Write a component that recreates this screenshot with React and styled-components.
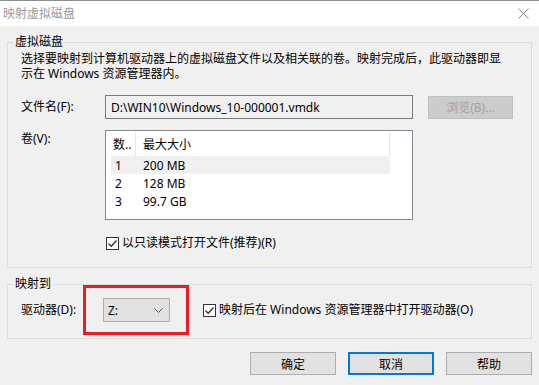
import styled, { createGlobalStyle } from "styled-components";

const GlobalStyle = createGlobalStyle`
  body {
    margin: 0;
    background: #f0f0f0;
    font-family: "Noto Sans", "Noto Sans CJK SC", sans-serif;
    font-size: 12px;
    color: #000;
  }
`;

const Window = styled.div`
  width: 539px;
  height: 385px;
  display: flex;
  flex-direction: column;
  background: #f0f0f0;
  overflow: hidden;
`;

const TitleBar = styled.div`
  height: 25px;
  border-top: 1px solid #8e8e8e;
  background: #fff;
  display: flex;
  align-items: center;
  justify-content: space-between;
  padding: 0 10px 0 3px;
`;

const Title = styled.span`
  color: #9a9a9a;
  line-height: 16px;
`;

const Body = styled.div`
  padding: 8px 7px 0 7px;
  display: flex;
  flex-direction: column;
`;

const Group = styled.fieldset`
  margin: ${(p) => p.$top || 0}px 0 0 0;
  border: 1px solid #dcdcdc;
  padding: ${(p) => p.$padTop}px 12px 16px 13px;
  min-width: 0;
`;

const Legend = styled.legend`
  padding: 0 2px;
  margin-left: -8px;
  line-height: 16px;
`;

const Description = styled.p`
  margin: 0;
  line-height: 15px;
`;

const Row = styled.div`
  display: flex;
  align-items: ${(p) => p.$align || "center"};
  margin-top: ${(p) => p.$top || 0}px;
`;

const Label = styled.span`
  width: ${(p) => p.$width}px;
  flex: none;
  line-height: 16px;
  padding-top: ${(p) => p.$padTop || 0}px;
`;

const TextBox = styled.div`
  width: 308px;
  height: 24px;
  box-sizing: border-box;
  border: 1px solid #7a7a7a;
  background: #f0f0f0;
  padding-left: 5px;
  display: flex;
  align-items: center;
`;

const Button = styled.button`
  width: ${(p) => p.$width || 86}px;
  height: 23px;
  box-sizing: border-box;
  margin: 0;
  margin-left: ${(p) => p.$left || 0}px;
  padding: 0;
  font: inherit;
  background: ${(p) => (p.disabled ? "#cccccc" : "#e1e1e1")};
  color: ${(p) => (p.disabled ? "#a0a0a0" : "#000")};
  border: ${(p) =>
    p.$focused ? "2px solid #0078d7" : `1px solid ${p.disabled ? "#bfbfbf" : "#adadad"}`};
`;

const ListBox = styled.div`
  width: 308px;
  height: 90px;
  box-sizing: border-box;
  border: 1px solid #828790;
  background: #fff;
  padding: 1px 0 0 5px;
`;

const ListRow = styled.div`
  width: 279px;
  height: ${(p) => (p.$header ? 24 : 18)}px;
  display: grid;
  grid-template-columns: 25px 254px;
  align-items: center;
  background: ${(p) => (p.$hover ? "#f0f0f0" : "transparent")};
`;

const Cell = styled.div`
  height: 100%;
  box-sizing: border-box;
  display: flex;
  align-items: center;
  padding-left: ${(p) => p.$pad}px;
  border-right: ${(p) => (p.$header ? "1px solid #e5e5e5" : "none")};
  white-space: nowrap;
`;

const CheckRow = styled.label`
  display: flex;
  align-items: center;
  gap: 3px;
  line-height: 16px;
  margin-left: ${(p) => p.$left || 0}px;
`;

const ComboWrap = styled.div`
  position: relative;
`;

const Combo = styled.div`
  width: 67px;
  height: 24px;
  box-sizing: border-box;
  border: 1px solid #adadad;
  background: #e1e1e1;
  display: flex;
  align-items: center;
  justify-content: space-between;
  padding: 0 6px 0 4px;
`;

const Highlight = styled.div`
  position: absolute;
  inset: -13px -19px -13px -20px;
  border: 3px solid #ec1c24;
  pointer-events: none;
`;

const Footer = styled.div`
  display: flex;
  justify-content: flex-end;
  gap: 12px;
  margin-top: 13px;
`;

const CheckBox = () => (
  <svg width="13" height="13" viewBox="0 0 13 13">
    <rect x="0.5" y="0.5" width="12" height="12" fill="#fff" stroke="#333" />
    <path d="M2.5 6.5 L5.2 9.2 L10.5 3.5" fill="none" stroke="#333" strokeWidth="1.3" />
  </svg>
);

const volumes = [
  { n: "1", size: "200 MB" },
  { n: "2", size: "128 MB" },
  { n: "3", size: "99.7 GB" },
];

export default function App() {
  return (
    <Window>
      <GlobalStyle />
      <TitleBar>
        <Title>映射虚拟磁盘</Title>
        <svg width="11" height="11" viewBox="0 0 11 11">
          <path d="M0.5 0.5 L10.5 10.5 M10.5 0.5 L0.5 10.5" stroke="#8a8a8a" strokeWidth="1" />
        </svg>
      </TitleBar>
      <Body>
        <Group $padTop={1}>
          <Legend>虚拟磁盘</Legend>
          <Description>
            选择要映射到计算机驱动器上的虚拟磁盘文件以及相关联的卷。映射完成后，此驱动器即显
            <br />
            示在 Windows 资源管理器内。
          </Description>
          <Row $top={14}>
            <Label $width={84}>文件名(F):</Label>
            <TextBox>D:\WIN10\Windows_10-000001.vmdk</TextBox>
            <Button disabled $width={85} $left={15}>
              浏览(B)...
            </Button>
          </Row>
          <Row $top={11} $align="flex-start">
            <Label $width={84} $padTop={1}>
              卷(V):
            </Label>
            <ListBox>
              <ListRow $header>
                <Cell $header $pad={2}>数..</Cell>
                <Cell $header $pad={7}>最大大小</Cell>
              </ListRow>
              {volumes.map((v, i) => (
                <ListRow key={v.n} $hover={i === 0}>
                  <Cell $pad={4}>{v.n}</Cell>
                  <Cell $pad={7}>{v.size}</Cell>
                </ListRow>
              ))}
            </ListBox>
          </Row>
          <Row $top={15}>
            <CheckRow $left={85}>
              <CheckBox />
              以只读模式打开文件(推荐)(R)
            </CheckRow>
          </Row>
        </Group>
        <Group $top={8} $padTop={6}>
          <Legend>映射到</Legend>
          <Row>
            <Label $width={82}>驱动器(D):</Label>
            <ComboWrap>
              <Combo>
                Z:
                <svg width="9" height="5" viewBox="0 0 9 5">
                  <path d="M0.5 0.5 L4.5 4.5 L8.5 0.5" fill="none" stroke="#555" strokeWidth="1" />
                </svg>
              </Combo>
              <Highlight />
            </ComboWrap>
            <CheckRow $left={33}>
              <CheckBox />
              映射后在 Windows 资源管理器中打开驱动器(O)
            </CheckRow>
          </Row>
        </Group>
        <Footer>
          <Button>确定</Button>
          <Button $focused>取消</Button>
          <Button>帮助</Button>
        </Footer>
      </Body>
    </Window>
  );
}
